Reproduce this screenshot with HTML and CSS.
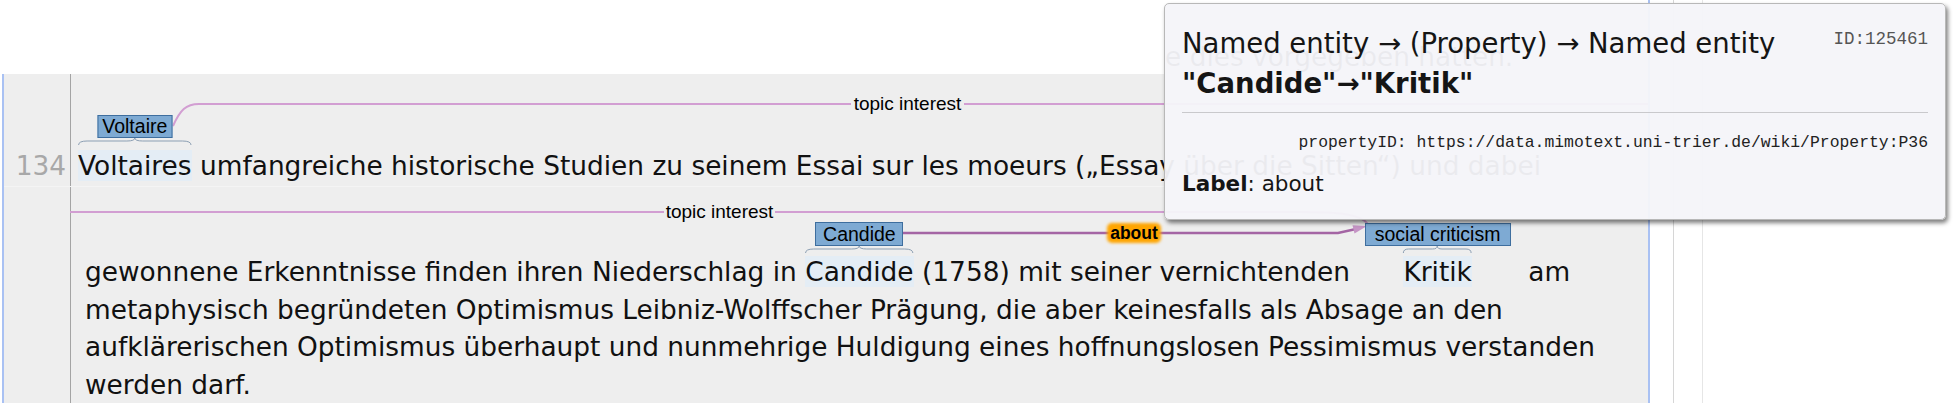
FILE: index.html
```html
<!DOCTYPE html>
<html lang="de">
<head>
<meta charset="utf-8">
<title>Annotation</title>
<link rel="stylesheet" href="styles.css">
</head>
<body>
<div class="app">
  <div class="doc">
    <div class="prev"><span class="prev-text">e dies vorgegeben hatten.</span></div>
    <div class="rows">
      <div class="row row1">
        <div class="lnum">134</div>
        <div class="txt txt1">
          <div class="ln"><span class="ent ent-top">Voltaires<svg class="brace" viewBox="0 0 100 7" preserveAspectRatio="none"><path d="M0.5,7 Q0.5,3 8,3 L43,3 Q50,3 50,0 Q50,3 57,3 L92,3 Q99.5,3 99.5,7" vector-effect="non-scaling-stroke"/></svg><span class="lbl lbl-v">Voltaire</span></span> umfangreiche historische Studien zu seinem Essai sur les moeurs („Essay über die Sitten“) und dabei</div>
        </div>
      </div>
      <div class="row row2">
        <div class="lnum lnum2"></div>
        <div class="txt txt2">
          <div class="ln">gewonnene Erkenntnisse finden ihren Niederschlag in <span class="ent">Candide<svg class="brace" viewBox="0 0 100 7" preserveAspectRatio="none"><path d="M0.5,7 Q0.5,3 8,3 L43,3 Q50,3 50,0 Q50,3 57,3 L92,3 Q99.5,3 99.5,7" vector-effect="non-scaling-stroke"/></svg><span class="lbl lbl-c">Candide</span></span> (1758) mit seiner vernichtenden <span class="ent ent-k">Kritik<svg class="brace" viewBox="0 0 100 7" preserveAspectRatio="none"><path d="M0.5,7 Q0.5,3 8,3 L43,3 Q50,3 50,0 Q50,3 57,3 L92,3 Q99.5,3 99.5,7" vector-effect="non-scaling-stroke"/></svg><span class="lbl lbl-s">social criticism</span></span> am</div>
          <div class="ln">metaphysisch begründeten Optimismus Leibniz-Wolffscher Prägung, die aber keinesfalls als Absage an den</div>
          <div class="ln">aufklärerischen Optimismus überhaupt und nunmehrige Huldigung eines hoffnungslosen Pessimismus verstanden</div>
          <div class="ln">werden darf.</div>
        </div>
      </div>
    </div>
    <svg class="arcs" width="1648" height="403" viewBox="0 0 1648 403">
      <defs>
        <filter id="glow" x="-40%" y="-60%" width="180%" height="220%">
          <feGaussianBlur stdDeviation="1.8"/>
        </filter>
      </defs>
      <path class="arc" d="M173,126 C180,110 186,104 199,104 H851 M964,104 H1648"/>
      <text class="arc-label" x="907.5" y="110">topic interest</text>
      <path class="arc" d="M70,212 H664 M775,212 H1300 C1340,212 1360,214 1368,224"/>
      <text class="arc-label" x="719.5" y="218">topic interest</text>
      <path class="arc-sel" d="M901,233 H1338 L1356,229"/>
      <polygon class="arc-head" points="1367,226 1354.5,233.5 1352.5,225.2"/>
      <rect class="about-bg" x="1107" y="223" width="54" height="20" rx="5" filter="url(#glow)"/>
      <text class="about-label" x="1134" y="238.5">about</text>
    </svg>
  </div>
  <div class="vline vline-blue"></div>
  <div class="gap gap1"></div>
  <div class="vline vline-gray"></div>
  <div class="gap gap2"></div>
  <div class="vline vline-light"></div>
  <div class="rest"></div>

  <div class="tooltip">
    <div class="tt-head">
      <div class="tt-title">
        <div class="tt-kind">Named entity → (Property) → Named entity</div>
        <div class="tt-pair">"Candide"→"Kritik"</div>
      </div>
      <div class="tt-id">ID:125461</div>
    </div>
    <div class="tt-sep"></div>
    <div class="tt-prop">propertyID: https://data.mimotext.uni-trier.de/wiki/Property:P36</div>
    <div class="tt-label"><b>Label</b>: about</div>
  </div>
</div>
</body>
</html>
```

FILE: styles.css
```css
html, body {
  margin: 0;
  padding: 0;
  background: #ffffff;
}

.app {
  position: relative;
  display: flex;
  width: 1953px;
  height: 403px;
  overflow: hidden;
}

.doc {
  position: relative;
  flex: none;
  width: 1648px;
  display: flex;
  flex-direction: column;
}

.prev {
  height: 74px;
  box-sizing: border-box;
  padding: 38px 0 0 1165px;
  font-family: "DejaVu Sans", sans-serif;
  font-size: 26.4px;
  line-height: 37.5px;
  color: #111;
  white-space: nowrap;
  overflow: hidden;
}

.rows {
  flex: 1;
  margin-left: 2px;
  border-left: 2px solid #a9c1f3;
  background: #eeeeee;
  display: flex;
  flex-direction: column;
}

.row {
  display: flex;
}

.row1 {
  height: 112px;
}

.row2 {
  flex: 1;
  border-top: 1px solid #f4f4f4;
}

.lnum {
  flex: none;
  width: 67px;
  box-sizing: border-box;
  border-right: 1px solid #a4a4a4;
  padding: 73px 4px 0 0;
  text-align: right;
  font-family: "DejaVu Sans", sans-serif;
  font-size: 26.4px;
  line-height: 37.5px;
  color: #a8a8a8;
}

.lnum2 {
  padding-top: 0;
}

.txt {
  flex: 1;
  font-family: "DejaVu Sans", sans-serif;
  font-size: 26.4px;
  line-height: 37.5px;
  color: #111;
}

.txt1 {
  padding: 73px 0 0 7px;
}

.txt2 {
  padding: 66px 0 0 14px;
}

.ln {
  white-space: nowrap;
}

.ent {
  position: relative;
  background: #e4edf5;
}

.ent-k {
  margin: 0 48px 0 45px;
}

.brace {
  position: absolute;
  left: 0;
  width: 100%;
  height: 7px;
  bottom: calc(100% + 3px);
  fill: none;
  stroke: #8c9fb3;
  stroke-width: 1;
  overflow: visible;
}

.ent-top .brace {
  bottom: calc(100% + 5px);
}

.lbl {
  position: absolute;
  z-index: 2;
  left: 50%;
  transform: translateX(-50%);
  bottom: calc(100% + 10px);
  height: 24px;
  box-sizing: border-box;
  background: #7eaad3;
  border: 1px solid #3e6e9e;
  font-family: "Liberation Sans", Arial, sans-serif;
  font-size: 19.5px;
  line-height: 22px;
  color: #000;
  text-align: center;
  white-space: nowrap;
}

.ent-top .lbl {
  bottom: calc(100% + 12px);
  height: 23px;
  line-height: 21px;
}

.lbl-v { width: 75px; }
.lbl-c { width: 88px; }
.lbl-s { width: 146px; height: 23px; line-height: 21px; }

.arcs {
  position: absolute;
  left: 0;
  top: 0;
  z-index: 1;
  pointer-events: none;
}

.arc {
  fill: none;
  stroke: #d29ed2;
  stroke-width: 2;
}

.arc-sel {
  fill: none;
  stroke: #a465a4;
  stroke-width: 2.5;
}

.arc-head {
  fill: #c595c5;
}

.arc-label {
  font-family: "Liberation Sans", Arial, sans-serif;
  font-size: 19px;
  fill: #000;
  text-anchor: middle;
}

.about-bg {
  fill: #ffa500;
}

.about-label {
  font-family: "Liberation Sans", Arial, sans-serif;
  font-weight: bold;
  font-size: 17.5px;
  fill: #000;
  text-anchor: middle;
}

.vline {
  flex: none;
  width: 1px;
  height: 100%;
}

.vline-blue {
  width: 2px;
  background: #a9c1f3;
}

.vline-gray {
  background: #d6d6d6;
}

.vline-light {
  background: #e6e6e6;
}

.gap1 { flex: none; width: 23px; }
.gap2 { flex: none; width: 28px; }
.rest { flex: 1; }

.tooltip {
  position: absolute;
  z-index: 5;
  left: 1164px;
  top: 3px;
  width: 782px;
  height: 217px;
  box-sizing: border-box;
  padding: 19px 17px 0 17px;
  background: rgba(245, 245, 249, 0.955);
  border: 1px solid #b8b8b8;
  border-radius: 5px;
  box-shadow: 2px 3px 4px rgba(0, 0, 0, 0.5);
  font-family: "DejaVu Sans", sans-serif;
  color: #151515;
}

.tt-head {
  display: flex;
  justify-content: space-between;
  align-items: flex-start;
}

.tt-title {
  font-size: 27.5px;
  line-height: 40px;
}

.tt-pair {
  font-weight: bold;
}

.tt-id {
  margin-top: 6px;
  font-family: "Liberation Mono", monospace;
  font-size: 17.5px;
  line-height: 20px;
  color: #555;
}

.tt-sep {
  margin-top: 9px;
  border-top: 1px solid #c9c9cc;
}

.tt-prop {
  margin-top: 20px;
  text-align: right;
  font-family: "Liberation Mono", monospace;
  font-size: 16.4px;
  line-height: 20px;
  color: #222;
  white-space: nowrap;
}

.tt-label {
  margin-top: 18px;
  font-size: 21.5px;
  line-height: 26px;
}
```
